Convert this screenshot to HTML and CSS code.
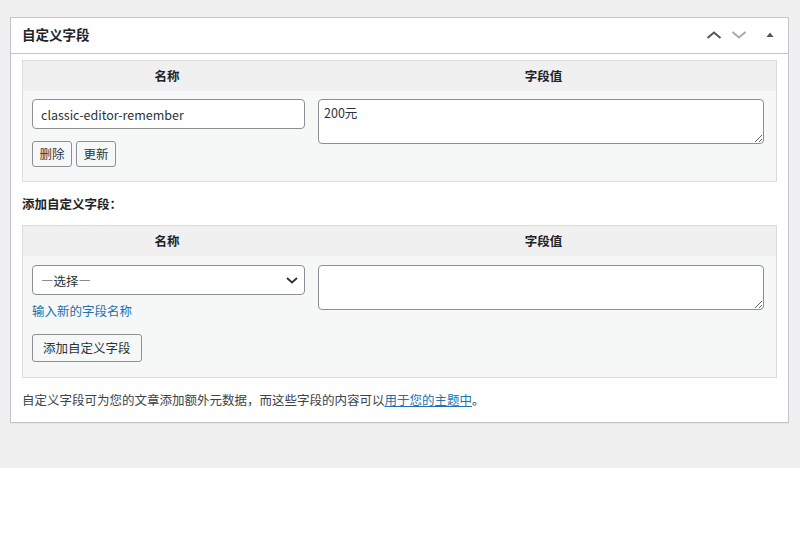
FILE: index.html
```html
<!DOCTYPE html>
<html lang="zh-CN">
<head>
<meta charset="utf-8">
<title>自定义字段</title>
<link rel="stylesheet" href="styles.css">
</head>
<body>
<div class="page">
  <div class="postbox">
    <div class="postbox-header">
      <h2 class="postbox-title">自定义字段</h2>
      <div class="handle-actions">
        <svg class="ico ico-up" width="16" height="10" viewBox="0 0 16 10"><path d="M1.5 8 L8 2.5 L14.5 8" fill="none" stroke="#50575e" stroke-width="2"/></svg>
        <svg class="ico ico-down" width="16" height="10" viewBox="0 0 16 10"><path d="M1.5 2 L8 7.5 L14.5 2" fill="none" stroke="#a7aaad" stroke-width="2"/></svg>
        <svg class="ico ico-toggle" width="8" height="10" viewBox="0 0 8 10"><path d="M0.5 7 L4 2.5 L7.5 7 Z" fill="#50575e"/></svg>
      </div>
    </div>
    <div class="inside">
      <div class="list-table">
        <div class="lt-head">
          <div class="lt-th">名称</div>
          <div class="lt-th">字段值</div>
        </div>
        <div class="lt-row">
          <div class="lt-name">
            <input class="text-input" type="text" value="classic-editor-remember">
            <div class="btn-row">
              <button class="btn btn-small">删除</button>
              <button class="btn btn-small">更新</button>
            </div>
          </div>
          <div class="lt-value">
            <textarea class="value-area">200元</textarea>
          </div>
        </div>
      </div>

      <p class="add-title">添加自定义字段：</p>

      <div class="list-table">
        <div class="lt-head">
          <div class="lt-th">名称</div>
          <div class="lt-th">字段值</div>
        </div>
        <div class="lt-row lt-row-add">
          <div class="lt-name">
            <div class="select-wrap">
              <select class="select-input"><option>—选择—</option></select>
              <svg class="select-arrow" width="14" height="10" viewBox="0 0 14 10"><path d="M2 3 L7 7.5 L12 3" fill="none" stroke="#2c3338" stroke-width="1.8"/></svg>
            </div>
            <a class="new-link" href="#">输入新的字段名称</a>
            <div class="btn-row btn-row-add">
              <button class="btn">添加自定义字段</button>
            </div>
          </div>
          <div class="lt-value">
            <textarea class="value-area"></textarea>
          </div>
        </div>
      </div>

      <p class="note">自定义字段可为您的文章添加额外元数据，而这些字段的内容可以<a href="#">用于您的主题中</a>。</p>
    </div>
  </div>
</div>
</body>
</html>
```

FILE: styles.css
```css
* { box-sizing: border-box; }

html, body {
  margin: 0;
  padding: 0;
  background: #ffffff;
  font-family: "Noto Sans CJK SC", "Noto Sans", sans-serif;
  font-size: 12.5px;
  color: #2c3338;
}

.page {
  background: #f0f0f1;
  height: 468px;
  padding: 17px 11px 0 10px;
}

.postbox {
  background: #ffffff;
  border: 1px solid #c3c4c7;
  box-shadow: 0 1px 1px rgba(0, 0, 0, 0.04);
}

.postbox-header {
  height: 36px;
  display: flex;
  align-items: center;
  justify-content: space-between;
  border-bottom: 1px solid #c3c4c7;
  padding: 0 14px 2px 11px;
}

.postbox-title {
  margin: 0;
  font-size: 13.5px;
  font-weight: 700;
  color: #1d2327;
  line-height: 1;
}

.handle-actions {
  display: flex;
  align-items: center;
  gap: 9px;
}

.ico-toggle { margin-left: 10px; }

.inside {
  padding: 6px 11px 13px 11px;
}

.list-table {
  border: 1px solid #dcdcde;
  background: #f6f7f7;
}

.lt-head {
  display: grid;
  grid-template-columns: 288px 1fr;
  background: #f0f0f1;
  height: 30px;
}

.lt-th {
  display: flex;
  align-items: center;
  justify-content: center;
  font-weight: 700;
  color: #1d2327;
  padding-bottom: 2px;
}

.lt-row {
  display: grid;
  grid-template-columns: 288px 1fr;
  padding: 8px 0 14px 0;
}

.lt-row-add {
  padding: 9px 0 15px 0;
}

.lt-name {
  padding: 0 6px 0 9px;
  display: flex;
  flex-direction: column;
  align-items: flex-start;
}

.lt-value {
  padding: 0 12px 0 7px;
}

.text-input,
.select-input {
  width: 100%;
  height: 30px;
  border: 1px solid #8c8f94;
  border-radius: 4px;
  background: #ffffff;
  font-family: "Noto Sans CJK SC", "Noto Sans", sans-serif;
  font-size: 12.5px;
  color: #2c3338;
  padding: 0 8px;
  margin: 0;
}

.select-wrap {
  position: relative;
  width: 100%;
}

.select-input {
  -webkit-appearance: none;
  appearance: none;
  padding: 0 24px 0 8px;
  font-feature-settings: "fwid";
}

.select-arrow {
  position: absolute;
  right: 6px;
  top: 10px;
  pointer-events: none;
}

.value-area {
  display: block;
  width: 100%;
  height: 45px;
  border: 1px solid #8c8f94;
  border-radius: 4px;
  background: #ffffff;
  font-family: "Noto Sans CJK SC", "Noto Sans", sans-serif;
  font-size: 12.5px;
  color: #2c3338;
  padding: 3px 5px;
  margin: 0;
  resize: vertical;
}

.btn-row {
  display: flex;
  gap: 4px;
  margin-top: 12px;
}

.btn {
  height: 28px;
  padding: 0 10px;
  border: 1px solid #8c8f94;
  border-radius: 3px;
  background: #f6f7f7;
  color: #2c3338;
  font-family: "Noto Sans CJK SC", "Noto Sans", sans-serif;
  font-size: 12.5px;
  line-height: 1;
  margin: 0;
}

.btn-small {
  height: 26px;
  padding: 0 6.5px;
}

.new-link {
  margin-top: 7px;
  color: #2271b1;
  text-decoration: none;
  line-height: 18px;
}

.btn-row-add {
  margin-top: 14px;
}

.add-title {
  margin: 12px 0 11px 0;
  font-weight: 700;
  color: #1d2327;
  line-height: 20px;
}

.note {
  margin: 13px 0 0 0;
  line-height: 18px;
  color: #3c434a;
}

.note a {
  color: #2271b1;
  text-decoration: underline;
}
```
